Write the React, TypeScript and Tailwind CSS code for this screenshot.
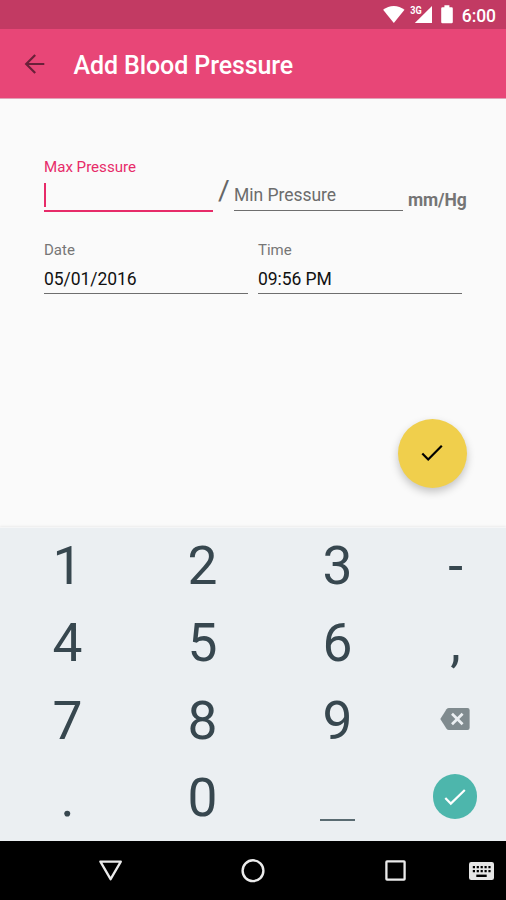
import React from "react";

function StatusBar() {
  return (
    <div className="flex h-[29px] items-start justify-end bg-[#c23a63] pr-[10px] text-white">
      <svg className="mt-[5px] h-[18px] w-[50px]" viewBox="0 0 50 18" fill="#fff">
        <path d="M.1 4.700C3.200 2.200 7 .900 10.800.900s7.600 1.300 10.700 3.800L10.800 18z" />
        <path d="M49 1v16.900H31.800z" />
        <text x="27.300" y="8.900" fontFamily="Roboto, sans-serif" fontWeight="700" fontSize="10" textLength="11.500" lengthAdjust="spacingAndGlyphs">3G</text>
      </svg>
      <svg className="ml-[8px] mt-[5px] h-[19px] w-[12px]" viewBox="0 0 12 19" fill="#fff">
        <path d="M3.400.300h5v1.900h2.200q1.200 0 1.200 1.200V17q0 1.200-1.200 1.200H1.400Q.2 18.200.2 17V3.400q0-1.200 1.200-1.200h2z" />
      </svg>
      <span className="ml-[9px] mt-[6px] text-[17.5px] font-medium leading-[20px] tracking-[-0.05px]">6:00</span>
    </div>
  );
}

function AppBar() {
  return (
    <header className="flex h-[70px] items-center border-b border-[#e0a3b7] bg-[#e84677] pl-[24px] pt-px">
      <svg className="h-[20px] w-[21px]" viewBox="0 0 21 20" fill="none" stroke="#6a2039" strokeWidth="2.200">
        <path d="M20.300 10H2.500M11.200 1L2.200 10l9 9" />
      </svg>
      <h1 className="ml-[28.500px] pt-[4px] text-[25px] font-medium leading-[30px] tracking-[-0.1px] text-white">Add Blood Pressure</h1>
    </header>
  );
}

function Field({ label, value }: { label: string; value: string }) {
  return (
    <div className="w-[204px] border-b border-[#6e6e6e]">
      <div className="pt-px text-[15px] leading-[20px] text-[#767676]">{label}</div>
      <div className="mt-[8px] h-[25px] text-[17.5px] leading-[22px] tracking-[-0.06px] text-[#111]">{value}</div>
    </div>
  );
}

function Form() {
  return (
    <main className="flex h-[428px] flex-col bg-[#fafafa] pl-[44px] pt-[57px]">
      <div className="flex h-[56px] items-end">
        <div className="h-[56px] w-[169px] border-b-2 border-[#e72b69]">
          <div className="pt-px text-[15.100px] leading-[21px] text-[#e72b69]">Max Pressure</div>
          <div className="mt-[5px] h-[24px] w-[2px] bg-[#e72b69]" />
        </div>
        <span className="ml-[5px] h-[38px] w-[12px] text-[28.500px] leading-[34px] text-[#666]">/</span>
        <div className="mb-[1px] ml-[4px] h-[27px] w-[169px] border-b border-[#6e6e6e] text-[17.5px] leading-[22px] tracking-[-0.03px] text-[#6c6c6c]">Min Pressure</div>
        <span className="ml-[5px] h-[23px] text-[17.5px] font-bold leading-[22px] tracking-[-0.1px] text-[#757575]">mm/Hg</span>
      </div>
      <div className="mt-[27px] flex gap-[10px]">
        <Field label="Date" value="05/01/2016" />
        <Field label="Time" value="09:56 PM" />
      </div>
      <div className="mr-[39.500px] mt-[124.500px] flex justify-end">
        <button className="flex h-[69px] w-[69px] items-center justify-center rounded-full bg-[#f0cf4c] shadow-[0_4px_8px_rgba(0,0,0,0.22)]">
          <svg className="h-[18px] w-[22px]" viewBox="0 0 22 18" fill="none" stroke="#000" strokeWidth="2.200">
            <path d="M1.300 9.500l5.900 6L20.800 1.700" />
          </svg>
        </button>
      </div>
    </main>
  );
}

const key = "flex h-[77.3px] w-[135px] items-center justify-center";
const side = "flex h-[77.3px] w-[101px] items-center justify-center";

function Keypad() {
  return (
    <div className="h-[314px] border-t border-[#f5f6f7] bg-[#ebeff2] text-[53.3px] leading-[77.3px] text-[#37474f] shadow-[0_-1px_2px_rgba(0,0,0,0.06)]">
      <div className="flex">
        <div className={key}>1</div>
        <div className={key}>2</div>
        <div className={key}>3</div>
        <div className={side}>-</div>
      </div>
      <div className="flex">
        <div className={key}>4</div>
        <div className={key}>5</div>
        <div className={key}>6</div>
        <div className={side}>,</div>
      </div>
      <div className="flex">
        <div className={key}>7</div>
        <div className={key}>8</div>
        <div className={key}>9</div>
        <div className={side}>
          <svg className="mb-[4px] mr-px h-[22px] w-[30px]" viewBox="0 0 30 22">
            <path d="M9 0h18.500Q29.600 0 29.600 2v18q0 2-2.100 2H9q-1.600 0-2.500-1.300L.3 11 6.500 1.300Q7.400 0 9 0z" fill="#808b8f" />
            <path d="M12 5.700l10.600 10.600M22.600 5.700L12 16.300" stroke="#ebeff2" strokeWidth="2.700" />
          </svg>
        </div>
      </div>
      <div className="flex">
        <div className={key}>.</div>
        <div className={key}>0</div>
        <div className={key}>
          <div className="mt-[42px] h-[2px] w-[35px] bg-[#5a6b72]" />
        </div>
        <div className={side}>
          <div className="mb-[4px] mr-px flex h-[44.500px] w-[44.500px] items-center justify-center rounded-full bg-[#4db6ac]">
            <svg className="h-[18px] w-[22px]" viewBox="0 0 22 18" fill="none" stroke="#fff" strokeWidth="2.200">
              <path d="M1.300 10l5.500 5.600L20.800 2" />
            </svg>
          </div>
        </div>
      </div>
    </div>
  );
}

function NavBar() {
  return (
    <nav className="flex h-[59px] items-center bg-black pl-[99px]">
      <svg className="h-[21px] w-[24px]" viewBox="0 0 24 21" fill="none" stroke="#ebebeb" strokeWidth="2.300" strokeLinejoin="round">
        <path d="M1.400 1.600h20.400L11.600 19.200z" />
      </svg>
      <svg className="ml-[118px] h-[24px] w-[24px]" viewBox="0 0 24 24" fill="none" stroke="#ebebeb" strokeWidth="2.400">
        <circle cx="12" cy="11.700" r="10.400" />
      </svg>
      <svg className="ml-[120px] h-[21px] w-[21px]" viewBox="0 0 21 21" fill="none" stroke="#ebebeb" strokeWidth="2.300">
        <rect x="1.400" y="1.300" width="18.200" height="18.400" rx=".6" />
      </svg>
      <svg className="ml-[63px] h-[18px] w-[25px]" viewBox="0 0 25 18">
        <rect x="0" y="0" width="25" height="18" rx="2.200" fill="#e6e6e6" />
        <path d="M3.800 5.200h17.800M3.800 9.100h17.800" stroke="#000" strokeWidth="2.200" strokeDasharray="2.200 1.700" />
        <path d="M7.300 13.800h10.400" stroke="#000" strokeWidth="2.400" />
      </svg>
    </nav>
  );
}

export default function App() {
  return (
    <div className="h-[900px] w-[506px] overflow-hidden bg-[#fafafa] font-[Roboto,sans-serif]">
      <StatusBar />
      <AppBar />
      <Form />
      <Keypad />
      <NavBar />
    </div>
  );
}
